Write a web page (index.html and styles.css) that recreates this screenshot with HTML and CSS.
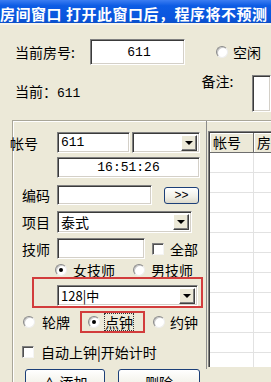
FILE: index.html
```html
<!DOCTYPE HTML>
<html>
    <head>
        <meta charset="UTF-8">
        <link rel="stylesheet" href="styles.css">
    </head>
    <body>
        <div class="title">房间窗口 打开此窗口后，程序将不预测</div>
        <div class="head">
          <div class="row1">
            <span class="lbl-top">当前房号:</span>
            <div class="box room num">611</div>
            <span class="radio"></span><span class="rtext">空闲</span>
          </div>
          <div class="row2">
            <span class="cur">当前：<span class="num">611</span></span>
            <span class="note">备注:</span>
            <div class="box notebox"></div>
          </div>
        </div>
        <div class="frame">
          <div class="left">
            <div class="row acct">
              <span class="lbl">帐号</span>
              <div class="box w73 num">611</div>
              <div class="box combo w68"><span class="val"></span><span class="drop"></span></div>
            </div>
            <div class="row time">
              <div class="box w143 num center">16:51:26</div>
            </div>
            <div class="row code">
              <span class="lbl">编码</span>
              <div class="box w95"></div>
              <div class="xbtn">&gt;&gt;</div>
            </div>
            <div class="row item">
              <span class="lbl">项目</span>
              <div class="box combo w135"><span class="val">泰式</span><span class="drop"></span></div>
            </div>
            <div class="row tech">
              <span class="lbl">技师</span>
              <div class="box w88"></div>
              <span class="check"></span><span class="ctext">全部</span>
            </div>
            <div class="row sex">
              <span class="radio on"></span><span class="rtext">女技师</span>
              <span class="radio r2"></span><span class="rtext">男技师</span>
            </div>
            <div class="pick">
              <div class="box combo w141"><span class="val">128|中</span><span class="drop"></span></div>
            </div>
            <div class="row mode">
              <span class="radio"></span><span class="rtext">轮牌</span>
              <div class="pick2">
                <span class="radio on"></span><span class="rtext focus">点钟</span>
              </div>
              <span class="radio r3"></span><span class="rtext t3">约钟</span>
            </div>
            <div class="row auto">
              <span class="check"></span><span class="ctext">自动上钟|开始计时</span>
            </div>
            <div class="row btns">
              <div class="btn b1">∧ 添加</div>
              <div class="btn b2">删除</div>
            </div>
          </div>
          <div class="side">
            <div class="grid">
              <div class="ghead"><span class="gc c1">帐号</span><span class="gc c2">房</span></div>
              <div class="grow"><span class="gd c1"></span><span class="gd c2"></span></div>
              <div class="grow"><span class="gd c1"></span><span class="gd c2"></span></div>
              <div class="grow"><span class="gd c1"></span><span class="gd c2"></span></div>
              <div class="grow"><span class="gd c1"></span><span class="gd c2"></span></div>
              <div class="grow"><span class="gd c1"></span><span class="gd c2"></span></div>
              <div class="grow"><span class="gd c1"></span><span class="gd c2"></span></div>
              <div class="grow"><span class="gd c1"></span><span class="gd c2"></span></div>
              <div class="grow"><span class="gd c1"></span><span class="gd c2"></span></div>
              <div class="grow"><span class="gd c1"></span><span class="gd c2"></span></div>
              <div class="grow"><span class="gd c1"></span><span class="gd c2"></span></div>
              <div class="grow"><span class="gd c1"></span><span class="gd c2"></span></div>
            </div>
          </div>
        </div>
    </body>
</html>
```

FILE: styles.css
```css
html, body {
  margin: 0;
  width: 271px;
  height: 382px;
  overflow: hidden;
}
body {
  background: #ece9d8;
  font-family: "Noto Sans CJK SC", sans-serif;
  font-size: 14px;
  color: #000;
}
.num { font-family: "Liberation Mono", "Noto Sans CJK SC", monospace; font-size: 13px; }

.title {
  height: 25px;
  box-sizing: border-box;
  padding-top: 4px;
  line-height: 19px;
  font-size: 15px;
  letter-spacing: 0.5px;
  font-weight: bold;
  color: #fff;
  white-space: nowrap;
  overflow: hidden;
  background: linear-gradient(#3b7df2, #0d5ce4 25%, #0a55dc 80%, #0b4fc9);
  border-bottom: 2px solid #f6f4ec;
}

/* top area */
.head { padding: 14px 0 0 15px; height: 95px; box-sizing: border-box; }
.row1 { display: flex; align-items: center; height: 26px; }
.lbl-top { width: 75px; line-height: 16px; }
.room { width: 95px; height: 26px; justify-content: center; }
.row1 .radio { margin-left: 31px; }
.row1 .rtext { margin-left: 5px; }
.row2 { display: flex; align-items: flex-start; margin-top: 10px; height: 45px; }
.cur { width: 197px; margin-top: 8px; line-height: 16px; }
.note { width: 53px; margin-top: -1px; line-height: 14px; }
.notebox { width: 20px; height: 37px; }

/* sunken edit */
.box {
  box-sizing: border-box;
  display: flex;
  align-items: center;
  background: #fff;
  border: 1px solid;
  border-color: #7f7f7f #fff #fff #7f7f7f;
  box-shadow: inset 1px 1px #3a3a3a, inset -1px -1px #d4d0c8;
  padding-left: 3px;
  overflow: hidden;
  white-space: nowrap;
}
.center { justify-content: center; padding-left: 0; }
.combo { padding-right: 2px; }
.combo .val { flex: 1; }
.drop {
  width: 16px;
  height: 16px;
  box-sizing: border-box;
  background: #ece9d8;
  border: 1px solid;
  border-color: #fff #404040 #404040 #fff;
  box-shadow: inset -1px -1px #808080;
  position: relative;
}
.drop::after {
  content: "";
  position: absolute;
  left: 3px;
  top: 5px;
  border-left: 4px solid transparent;
  border-right: 4px solid transparent;
  border-top: 4px solid #000;
}

.w73 { width: 73px; height: 21px; }
.w68 { width: 68px; height: 21px; margin-left: 2px; }
.w143 { width: 143px; height: 21px; }
.w95 { width: 95px; height: 20px; }
.w135 { width: 135px; height: 22px; }
.w88 { width: 88px; height: 21px; }
.w141 { width: 141px; height: 21px; font-size: 13px; }

/* radios and checks */
.radio {
  width: 12px;
  height: 12px;
  box-sizing: border-box;
  border-radius: 50%;
  background: #fff;
  border: 1px solid;
  border-color: #8a8a8a #eeeeee #eeeeee #8a8a8a;
  box-shadow: inset 1px 1px #c8c8c8;
  flex: none;
  position: relative;
}
.radio.on::after {
  content: "";
  position: absolute;
  left: 3px;
  top: 3px;
  width: 4px;
  height: 4px;
  border-radius: 50%;
  background: #000;
}
.check {
  width: 12px;
  height: 12px;
  box-sizing: border-box;
  background: #fff;
  border: 1px solid;
  border-color: #808080 #f4f4f4 #f4f4f4 #808080;
  box-shadow: inset 1px 1px #505050;
  flex: none;
}
.rtext, .ctext { line-height: 16px; }

/* group frame */
.frame {
  display: flex;
  margin-left: 12px;
  height: 262px;
  box-sizing: border-box;
  border-top: 1px solid #a9a698;
  border-left: 1px solid #a9a698;
  box-shadow: inset 1px 1px #fff;
}
.left { width: 193px; display: flex; flex-direction: column; flex: none; }
.row { display: flex; align-items: center; }
.lbl { width: 44px; box-sizing: border-box; padding-left: 9px; line-height: 16px; flex: none; }

.acct { margin-top: 11px; height: 21px; }
.acct .lbl { margin-left: -3px; width: 47px; padding-left: 0; }
.time { margin-top: 4px; height: 21px; padding-left: 44px; }
.code { margin-top: 7px; height: 20px; }
.xbtn {
  margin-left: 12px;
  width: 35px;
  height: 17px;
  box-sizing: border-box;
  border: 1px solid #1c3f78;
  border-radius: 3px;
  background: linear-gradient(#ffffff, #f0efe6 60%, #dcd9cb);
  font-family: "Liberation Sans", sans-serif;
  font-size: 12px;
  line-height: 15px;
  text-align: center;
}
.item { margin-top: 6px; height: 22px; }
.tech { margin-top: 5px; height: 21px; }
.tech .check { margin-left: 7px; }
.tech .ctext { margin-left: 6px; }
.sex { margin-top: 4px; height: 14px; padding-left: 42px; }
.sex .rtext { margin-left: 6px; }
.sex .r2 { margin-left: 18px; }

.pick {
  margin-left: 19px;
  width: 171px;
  height: 31px;
  box-sizing: border-box;
  border: 2px solid #d23c3c;
  padding: 6px 0 0 23px;
}
.mode { margin-top: 3px; height: 22px; padding-left: 10px; }
.mode .rtext { margin-left: 7px; }
.pick2 {
  display: flex;
  align-items: center;
  margin-left: 10px;
  width: 65px;
  height: 22px;
  box-sizing: border-box;
  border: 2px solid #d23c3c;
  padding-left: 6px;
}
.pick2 .rtext { margin-left: 5px; }
.focus { outline: 1px dotted #333; outline-offset: 0; }
.mode .r3 { margin-left: 8px; }
.mode .t3 { margin-left: 5px; }
.auto { margin-top: 12px; height: 14px; padding-left: 9px; }
.auto .ctext { margin-left: 7px; }

.btns { margin-top: 10px; padding-left: 12px; align-items: flex-start; }
.btn {
  height: 24px;
  box-sizing: border-box;
  border: 1px solid #1c3f78;
  border-radius: 3px;
  background: linear-gradient(#ffffff, #f3f2ea 60%, #dedbcd);
  text-align: center;
  line-height: 20px;
  padding-top: 2px;
}
.b1 { width: 80px; }
.b2 { width: 82px; margin-left: 13px; }

/* list on the right */
.side {
  flex: 1;
  height: 248px;
  border-left: 1px solid #8c8c8c;
}
.grid {
  margin: 10px 0 0 1px;
  height: 236px;
  box-sizing: border-box;
  background: #fff;
  border-top: 1px solid #808080;
  border-left: 1px solid #808080;
  box-shadow: inset 1px 1px #404040;
  padding: 1px 0 0 1px;
  overflow: hidden;
}
.ghead { display: flex; height: 20px; }
.gc {
  box-sizing: border-box;
  height: 20px;
  background: #ece9d8;
  border-right: 1px solid #6e6e6e;
  border-bottom: 1px solid #6e6e6e;
  box-shadow: inset 1px 1px #fff;
  line-height: 18px;
  padding-left: 3px;
  white-space: nowrap;
  overflow: hidden;
}
.c1 { width: 44px; flex: none; }
.c2 { flex: 1; }
.grow { display: flex; height: 20px; }
.gd {
  box-sizing: border-box;
  border-right: 1px solid #e2e2e2;
  border-bottom: 1px solid #e2e2e2;
}
```
